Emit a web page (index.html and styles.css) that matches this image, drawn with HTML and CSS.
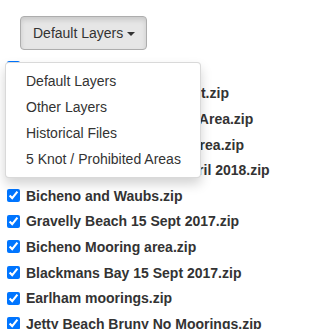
FILE: index.html
```html
<!DOCTYPE html>
<html>
<head>
<meta charset="utf-8" />
<title>Layers</title>
<link rel="stylesheet" href="styles.css">
</head>
<body>
	<div class="layerPicker">
		<div class="btnGroup">
			<button class="btn" type="button">Default Layers <span class="caret"></span></button>
		</div>

		<ul class="dropdownMenu">
			<li><a href="#">Default Layers</a></li>
			<li><a href="#">Other Layers</a></li>
			<li><a href="#">Historical Files</a></li>
			<li><a href="#">5 Knot / Prohibited Areas</a></li>
		</ul>

		<div class="fileList">
			<label class="checkbox"><input type="checkbox" checked> Boat Ramps.zip</label>
			<label class="checkbox"><input type="checkbox" checked> Kettering Marina 10 Transit.zip</label>
			<label class="checkbox"><input type="checkbox" checked> Cygnet 15 Knot Moorings Area.zip</label>
			<label class="checkbox"><input type="checkbox" checked> Dover Old Boat Harbour Area.zip</label>
			<label class="checkbox"><input type="checkbox" checked> Triabunna Survey 12th April 2018.zip</label>
			<label class="checkbox"><input type="checkbox" checked> Bicheno and Waubs.zip</label>
			<label class="checkbox"><input type="checkbox" checked> Gravelly Beach 15 Sept 2017.zip</label>
			<label class="checkbox"><input type="checkbox" checked> Bicheno Mooring area.zip</label>
			<label class="checkbox"><input type="checkbox" checked> Blackmans Bay 15 Sept 2017.zip</label>
			<label class="checkbox"><input type="checkbox" checked> Earlham moorings.zip</label>
			<label class="checkbox"><input type="checkbox" checked> Jetty Beach Bruny No Moorings.zip</label>
		</div>
	</div>
</body>
</html>
```

FILE: styles.css
```css
body {
	margin: 0;
	font-size: 14px;
	line-height: 20px;
	color: #333;
	font-family: "Liberation Sans", Arial, Helvetica, sans-serif;
	background: #fff;
}

.layerPicker {
	position: relative;
	padding-top: 16px;
}

.btnGroup {
	padding-left: 20px;
}

.btn {
	height: 34px;
	padding: 6px 11px 6px 12px;
	font-family: inherit;
	font-size: 14px;
	line-height: 20px;
	color: #333;
	background-color: #e6e6e6;
	border: 1px solid #adadad;
	border-radius: 4px;
	box-shadow: inset 0 3px 5px rgba(0, 0, 0, .125);
}

.caret {
	display: inline-block;
	width: 0;
	height: 0;
	vertical-align: middle;
	border-top: 4px solid #333;
	border-left: 4px solid transparent;
	border-right: 4px solid transparent;
}

.dropdownMenu {
	position: absolute;
	top: 62px;
	left: 5px;
	z-index: 10;
	width: 194px;
	margin: 0;
	padding: 5px 0;
	list-style: none;
	background: #fff;
	border: 1px solid rgba(0, 0, 0, .15);
	border-radius: 4px;
	box-shadow: 0 6px 12px rgba(0, 0, 0, .175);
}

.dropdownMenu a {
	display: block;
	padding: 3px 20px;
	line-height: 20px;
	color: #333;
	text-decoration: none;
	white-space: nowrap;
}

.fileList {
	padding-top: 5px;
}

.checkbox {
	display: flex;
	align-items: center;
	height: 25.6px;
	padding-left: 7px;
	font-weight: bold;
	white-space: pre;
}

.checkbox input {
	width: 13px;
	height: 13px;
	margin: 0 2px 0 0;
}
```
